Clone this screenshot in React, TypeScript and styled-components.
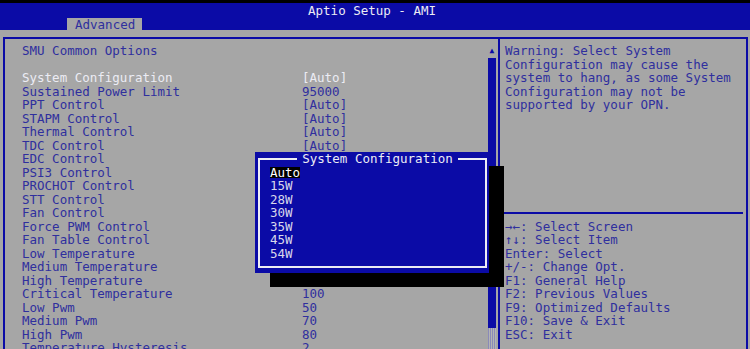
import React from 'react';
import styled, { createGlobalStyle } from 'styled-components';

const GRAY = '#a6a6a6';
const BLUE = '#0b0ba6';
const INK = '#2f2f9e';
const WHITE = '#ececf4';
const ROW = 13.5;

const Global = createGlobalStyle`
  html, body { margin: 0; padding: 0; background: ${GRAY}; overflow: hidden; }
  body {
    font-family: "DejaVu Sans Mono", "Liberation Mono", monospace;
    font-size: 12.5px;
    line-height: ${ROW}px;
  }
`;

const Screen = styled.div`
  position: relative;
  width: 750px;
  height: 349px;
  overflow: hidden;
  background: ${GRAY};
  display: flex;
  flex-direction: column;
`;

const TopStrip = styled.div`
  flex: none;
  height: 3px;
  background: #000;
`;

const Header = styled.header`
  flex: none;
  height: 27px;
  background: ${BLUE};
  display: flex;
  flex-direction: column;
  justify-content: space-between;
`;

const Title = styled.div`
  color: ${WHITE};
  text-align: center;
  padding: 1px 6px 0 0;
  white-space: pre;
`;

const TabBar = styled.div`
  display: flex;
  padding-left: 67px;
`;

const Tab = styled.div`
  width: 75px;
  height: 13px;
  line-height: 13px;
  box-sizing: border-box;
  padding-left: 8px;
  background: ${GRAY};
  color: ${INK};
`;

const Frame = styled.main`
  flex: 1;
  margin: 7px 2px 0 3px;
  border: 2px solid ${BLUE};
  border-bottom: none;
  display: grid;
  grid-template-columns: 483px 10px 1fr;
  min-height: 0;
`;

const LeftPanel = styled.section`
  padding: 5px 0 0 17px;
`;

const Line = styled.div<{ $color?: string }>`
  height: ${ROW}px;
  color: ${(p) => p.$color || INK};
  white-space: pre;
`;

const Row = styled.div<{ $selected?: boolean }>`
  display: grid;
  grid-template-columns: 280px 1fr;
  height: ${ROW}px;
  color: ${(p) => (p.$selected ? WHITE : INK)};
  white-space: pre;
`;

const Blank = styled.div<{ $rows: number }>`
  height: ${(p) => p.$rows * ROW}px;
`;

const ScrollCol = styled.div`
  padding-top: 5px;
  display: flex;
  flex-direction: column;
`;

const ScrollArrow = styled.div`
  width: 8px;
  height: ${ROW}px;
  display: flex;
  align-items: center;
  justify-content: center;
  color: ${BLUE};
  font-size: 8px;
  line-height: 8px;
`;

const ScrollThumb = styled.div`
  width: 8px;
  height: ${20 * ROW}px;
  background: ${BLUE};
`;

const ScrollTrack = styled.div`
  width: 8px;
  flex: 1;
  background: repeating-linear-gradient(90deg, #8a8ab8 0 1px, #b4b4b4 1px 2px);
`;

const RightPanel = styled.aside`
  border-left: 2px solid ${BLUE};
  padding: 5px 3px 0 5px;
`;

const RuleRow = styled.div`
  height: ${ROW}px;
  margin-left: -5px;
  display: flex;
  align-items: center;
  &::before {
    content: '';
    flex: 1;
    height: 2px;
    background: ${BLUE};
  }
`;

const Popup = styled.div`
  position: absolute;
  left: 255px;
  top: 152px;
  width: 234px;
  box-sizing: border-box;
  padding: 0 2px 5px 3px;
  background: ${BLUE};
  box-shadow: 15px 14px 0 #000;
  z-index: 2;
`;

const PopupFrame = styled.fieldset`
  margin: 0;
  padding: 0 0 6px 10px;
  border: 2px solid ${WHITE};
  min-width: 0;
`;

const PopupTitle = styled.legend`
  margin: 0 auto;
  padding: 0 5px;
  color: ${WHITE};
  line-height: ${ROW}px;
  white-space: pre;
`;

const Option = styled.div`
  height: ${ROW}px;
  display: flex;
  align-items: center;
`;

const OptionLabel = styled.span<{ $active?: boolean }>`
  line-height: 11px;
  color: ${(p) => (p.$active ? '#ffffff' : '#d8d8ea')};
  background: ${(p) => (p.$active ? '#000' : 'transparent')};
`;

const items: [string, string][] = [
  ['System Configuration', '[Auto]'],
  ['Sustained Power Limit', '95000'],
  ['PPT Control', '[Auto]'],
  ['STAPM Control', '[Auto]'],
  ['Thermal Control', '[Auto]'],
  ['TDC Control', '[Auto]'],
  ['EDC Control', ''],
  ['PSI3 Control', ''],
  ['PROCHOT Control', ''],
  ['STT Control', ''],
  ['Fan Control', ''],
  ['Force PWM Control', ''],
  ['Fan Table Control', ''],
  ['Low Temperature', ''],
  ['Medium Temperature', ''],
  ['High Temperature', ''],
  ['Critical Temperature', '100'],
  ['Low Pwm', '50'],
  ['Medium Pwm', '70'],
  ['High Pwm', '80'],
  ['Temperature Hysteresis', '2'],
];

const help = [
  'Warning: Select System',
  'Configuration may cause the',
  'system to hang, as some System',
  'Configuration may not be',
  'supported by your OPN.',
];

const keys = [
  '\u2192\u2190: Select Screen',
  '\u2191\u2193: Select Item',
  'Enter: Select',
  '+/-: Change Opt.',
  'F1: General Help',
  'F2: Previous Values',
  'F9: Optimized Defaults',
  'F10: Save & Exit',
  'ESC: Exit',
];

const options = ['Auto', '15W', '28W', '30W', '35W', '45W', '54W'];

export default function App() {
  return (
    <Screen>
      <Global />
      <TopStrip />
      <Header>
        <Title>Aptio Setup - AMI</Title>
        <TabBar>
          <Tab>Advanced</Tab>
        </TabBar>
      </Header>
      <Frame>
        <LeftPanel>
          <Line>SMU Common Options</Line>
          <Blank $rows={1} />
          {items.map(([name, value], i) => (
            <Row key={name} $selected={i === 0}>
              <span>{name}</span>
              <span>{value}</span>
            </Row>
          ))}
        </LeftPanel>
        <ScrollCol>
          <ScrollArrow>{'\u25B2'}</ScrollArrow>
          <ScrollThumb />
          <ScrollTrack />
        </ScrollCol>
        <RightPanel>
          {help.map((t) => (
            <Line key={t}>{t}</Line>
          ))}
          <Blank $rows={7} />
          <RuleRow />
          {keys.map((t) => (
            <Line key={t}>{t}</Line>
          ))}
        </RightPanel>
      </Frame>
      <Popup>
        <PopupFrame>
          <PopupTitle>System Configuration</PopupTitle>
          {options.map((o, i) => (
            <Option key={o}>
              <OptionLabel $active={i === 0}>{o}</OptionLabel>
            </Option>
          ))}
        </PopupFrame>
      </Popup>
    </Screen>
  );
}
